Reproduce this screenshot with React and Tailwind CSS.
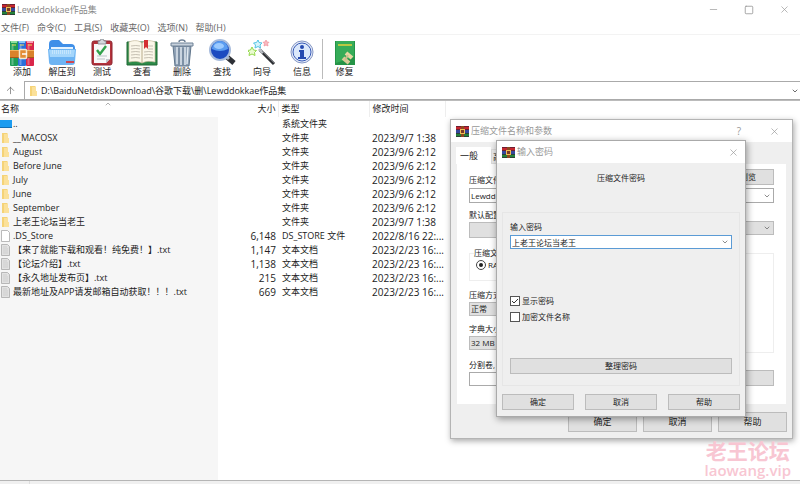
import { useState } from 'react';
import { ArrowUp, ChevronDown, ChevronUp, Minus, Square, X } from 'lucide-react';

const archivos = [
  { nombre: '__MACOSX', tam: '', tipo: '文件夹', fecha: '2023/9/7 1:38', icono: 'carpeta' },
  { nombre: 'August', tam: '', tipo: '文件夹', fecha: '2023/9/6 2:12', icono: 'carpeta' },
  { nombre: 'Before June', tam: '', tipo: '文件夹', fecha: '2023/9/6 2:12', icono: 'carpeta' },
  { nombre: 'July', tam: '', tipo: '文件夹', fecha: '2023/9/6 2:12', icono: 'carpeta' },
  { nombre: 'June', tam: '', tipo: '文件夹', fecha: '2023/9/6 2:12', icono: 'carpeta' },
  { nombre: 'September', tam: '', tipo: '文件夹', fecha: '2023/9/6 2:12', icono: 'carpeta' },
  { nombre: '上老王论坛当老王', tam: '', tipo: '文件夹', fecha: '2023/9/7 1:38', icono: 'carpeta' },
  { nombre: '.DS_Store', tam: '6,148', tipo: 'DS_STORE 文件', fecha: '2022/8/16 22:...', icono: 'vacio' },
  { nombre: '【来了就能下载和观看！纯免费！】.txt', tam: '1,147', tipo: '文本文档', fecha: '2023/2/23 16:...', icono: 'texto' },
  { nombre: '【论坛介绍】.txt', tam: '1,138', tipo: '文本文档', fecha: '2023/2/23 16:...', icono: 'texto' },
  { nombre: '【永久地址发布页】.txt', tam: '215', tipo: '文本文档', fecha: '2023/2/23 16:...', icono: 'texto' },
  { nombre: '最新地址及APP请发邮箱自动获取！！！.txt', tam: '669', tipo: '文本文档', fecha: '2023/2/23 16:...', icono: 'texto' },
];

function Libros({ className }) {
  return (
    <svg viewBox="0 0 24 26" preserveAspectRatio="none" className={className}>
      <rect x="0" y="1" width="8" height="25" rx="1" fill="#1f9d55" />
      <rect x="8" y="1" width="8" height="25" rx="1" fill="#2a6fdb" />
      <rect x="16" y="1" width="8" height="25" rx="1" fill="#d9264a" />
      <path d="M1 1h6v2H1z" fill="#8fe0a0" />
      <path d="M9 1h6v2H9z" fill="#8ccbf8" />
      <path d="M17 1h6v2h-6z" fill="#f9a0b3" />
      <path d="M2.500 4v21M10.500 4v21M18.500 4v21" stroke="#fff" strokeOpacity=".3" strokeWidth="2" />
      <path d="M2 5h4M10 5h4M18 5h4" stroke="#f2d84e" />
      <rect x="0" y="10" width="24" height="8" fill="#d9822b" />
      <path d="M0 10.500h24" stroke="#f3b25c" />
      <path d="M0 17.500h24" stroke="#a65a17" />
      <rect x="9.500" y="9.500" width="7" height="9" rx="1" fill="#e38d35" stroke="#f4ead2" strokeWidth="1.500" />
      <path d="M12 14h5" stroke="#fff" strokeWidth="1.500" />
    </svg>
  );
}

function LibrosMini() {
  return (
    <svg viewBox="0 0 13 11" className="h-[11px] w-[13px] shrink-0">
      <path d="M0 0h13v4H0z" fill="#c5262e" />
      <path d="M0 4h13v3H0z" fill="#35489c" />
      <path d="M0 7h13v4H0z" fill="#24803a" />
      <path d="M0 .5h13M0 3.5h13M0 7.5h13M0 10.5h13" stroke="#321b35" strokeOpacity=".6" />
      <path d="M5 0h3v11H5z" fill="#8d4a20" />
      <rect x="4.5" y="3.5" width="4" height="4" fill="#7b3b25" stroke="#f0bd55" />
    </svg>
  );
}

function IconoCarpeta() {
  return (
    <svg viewBox="0 0 28 27" className="h-[27px] w-7">
      <path d="M1 5a4 4 0 0 1 4-4h6l4 4h8a4 4 0 0 1 4 4v5H1z" fill="#3f8fe8" />
      <path d="M3 8h22v6H3z" fill="#e4f3ff" />
      <path d="M0 10h28l-1 13a3 3 0 0 1-3 3H4a3 3 0 0 1-3-3z" fill="#6db4f3" />
      <path d="M1 11h26l-1 7H2z" fill="#a5d6fb" />
      <path d="M4 14h20M4 12h20" stroke="#e3f4ff" strokeDasharray="1 1" />
      <path d="M18 22h8v2h-8z" fill="#cf4752" />
    </svg>
  );
}

function IconoPrueba() {
  return (
    <svg viewBox="0 0 22 27" className="h-[27px] w-[22px]">
      <rect x="1" y="2" width="20" height="24" rx="2" fill="#b5323b" stroke="#8c2530" />
      <path d="M3 5h16v15l-4 4H3z" fill="#f8f8f8" />
      <path d="M19 20h-4v4z" fill="#c2c8cf" />
      <path d="M7 2h2a2 2 0 0 1 4 0h2v3H7z" fill="#d4d7dc" stroke="#70777e" strokeWidth=".7" />
      <path d="m6 11 3 4 6-8" fill="none" stroke="#31a14b" strokeWidth="2.4" />
      <path d="M6 17h10M6 20h8" stroke="#bdc3ca" />
    </svg>
  );
}

function IconoLibro() {
  return (
    <svg viewBox="0 0 32 27" className="h-[27px] w-8">
      <path d="M1 3h30v23H1z" fill="#2c8a48" stroke="#206935" />
      <path d="M3 3c5-2 9-2 13 1 4-3 8-3 13-1v20c-5-1-9-1-13 1-4-2-8-2-13-1z" fill="#fbf7e9" stroke="#c8bda0" strokeWidth=".7" />
      <path d="M16 4v20" stroke="#b9ac8b" />
      <path d="M5 7q5-1 9 0M5 10q5-1 9 0M5 13q5-1 9 0M5 16q5-1 9 0M5 19q5-1 9 0M18 13q5-1 9 0M18 16q5-1 9 0M18 19q5-1 9 0M22 7h5M22 10h5" fill="none" stroke="#b7b1a3" strokeWidth=".8" />
      <path d="M18 1h4v9l-2-2-2 2z" fill="#d42f32" />
    </svg>
  );
}

function IconoPapelera() {
  return (
    <svg viewBox="0 0 24 28" className="h-7 w-6">
      <path d="M9 3q0-2 3-2t3 2" fill="none" stroke="#708398" strokeWidth="1.5" />
      <path d="M3 7h18l-2 20H5z" fill="#91a3b7" stroke="#60758b" />
      <path d="M7 8v17M11 8v18M15 8v18M18 8l-1 17" stroke="#e1e9f0" strokeWidth="1.4" />
      <path d="M9 9v17M13 9v17" stroke="#60758b" strokeWidth=".8" />
      <path d="M1 4h22v3H1z" fill="#c7d1dc" stroke="#6e8297" />
    </svg>
  );
}

function IconoLupa() {
  return (
    <svg viewBox="0 0 28 28" className="h-7 w-7">
      <path d="m19 18 7 6" stroke="#2d3036" strokeWidth="5" />
      <path d="m18 17 3 3" stroke="#a9b2bd" strokeWidth="3" />
      <circle cx="12" cy="11" r="10" fill="#1c4bc0" stroke="#a6bbdc" strokeWidth="2" />
      <path d="M4 10a8 8 0 0 1 16 0q-8 4-16 0z" fill="#5a9df1" />
      <ellipse cx="11" cy="7" rx="5" ry="3" fill="#9bcaff" />
    </svg>
  );
}

function IconoVarita() {
  return (
    <svg viewBox="0 0 28 28" className="h-7 w-7">
      <path d="m12 11 14 14" stroke="#2e3034" strokeWidth="3" />
      <path d="m11 10 4 4" stroke="#b8bcc2" strokeWidth="3" />
      <path d="m14 12 12 12" stroke="#7c8086" strokeWidth=".8" />
      <path d="m10 1 1 2.500 3 .5-2 2 .500 3-2.500-1.500L7 9l.5-3-2-2 3-.5z" fill="#d4f3fb" stroke="#54c4e4" />
      <path d="m4 8 1.500 3 3 .5-2 2 .500 3L4 15l-3 1.500.5-3-2-2 3-.5z" fill="#eafbd0" stroke="#93d84b" />
      <path d="m18 1 1 2 2 .3-1.500 1.500.5 2.200-2-1-2 1 .5-2.200L15 3.300l2-.3z" fill="#f9b9bf" stroke="#ee8e99" strokeWidth=".7" />
    </svg>
  );
}

function IconoInfo() {
  return (
    <svg viewBox="0 0 24 27" className="h-[27px] w-6">
      <circle cx="12" cy="13" r="11" fill="#e7edf8" stroke="#8395c4" />
      <circle cx="12" cy="13" r="9" fill="#dbe8fb" stroke="#3659b7" />
      <circle cx="12" cy="8" r="2" fill="#2449b0" />
      <path d="M9 11h5v7h2v2H8v-2h2v-5H9z" fill="#2449b0" />
    </svg>
  );
}

function IconoReparar() {
  return (
    <svg viewBox="0 0 20 26" className="h-[26px] w-5">
      <path d="M0 1h20v24H0z" fill="#259447" />
      <path d="M1 1h18v16L1 23z" fill="#36ac58" />
      <path d="M3 5h14" stroke="#e5d23d" strokeWidth="1.500" />
      <path d="m11 13 6 5" stroke="#e6d7a2" strokeWidth="4" />
      <path d="m8 18 6 5" stroke="#d8cc98" strokeWidth="4" />
      <path d="m13 15-3 5" stroke="#c7bd8c" strokeWidth="2" />
    </svg>
  );
}

const herramientas = [
  { texto: '添加', icono: <Libros className="h-[26px] w-6" /> },
  { texto: '解压到', icono: <IconoCarpeta /> },
  { texto: '测试', icono: <IconoPrueba /> },
  { texto: '查看', icono: <IconoLibro /> },
  { texto: '删除', icono: <IconoPapelera /> },
  { texto: '查找', icono: <IconoLupa /> },
  { texto: '向导', icono: <IconoVarita /> },
  { texto: '信息', icono: <IconoInfo /> },
];

function IconoArchivo({ tipo }) {
  if (tipo === 'disco') {
    return (
      <svg viewBox="0 0 12 10" className="h-[10px] w-3 shrink-0">
        <path d="M0 1h12v7H0z" fill="#1c9cf0" />
        <path d="M0 8h12v1H0z" fill="#1370b5" />
      </svg>
    );
  }
  if (tipo === 'carpeta') {
    return (
      <svg viewBox="0 0 12 12" className="h-3 w-3 shrink-0">
        <path d="M2 1h5l1 1v9H2z" fill="#f5d377" />
        <path d="M4 2h4v4h1v5H4z" fill="#fbe19a" />
      </svg>
    );
  }
  return (
    <svg viewBox="0 0 12 12" className="h-3 w-3 shrink-0">
      <path d="M1.500.5h6l2 2v9h-8z" fill={tipo === 'texto' ? '#e2e2e2' : '#fff'} stroke="#aaa" strokeWidth=".8" />
      {tipo === 'texto' && <path d="M3 3h4M3 5h5M3 7h5M3 9h5" stroke="#c4c4c4" strokeWidth=".7" />}
    </svg>
  );
}

function Boton({ children, className, etiqueta }) {
  return (
    <button type="button" aria-label={etiqueta} className={`flex items-center justify-center border border-[#bcbcbc] bg-[#e0e0e0] ${className}`}>
      {children}
    </button>
  );
}

function Desplegable({ id, valor, className }) {
  return (
    <div className={`relative flex h-[14px] border border-[#bcbcbc] ${className}`}>
      <select id={id} aria-label={valor || '配置'} className="w-full appearance-none bg-transparent px-px text-[8px] leading-3">
        <option>{valor}</option>
      </select>
      <ChevronDown size={8} className="pointer-events-none absolute top-[2px] right-[2px] text-[#555]" />
    </div>
  );
}

function DialogoCompresion() {
  return (
    <section className="absolute top-[119px] left-[450px] flex w-[343px] flex-col border border-[#b4b4b4] bg-[#efefef] text-[8px] leading-3 shadow-[1px_2px_6px_rgba(0,0,0,0.35)]">
      <header className="flex h-[22px] items-center bg-white pr-3 pl-[5px] text-[9px] text-[#999]">
        <LibrosMini />
        <h2 className="ml-[2px] flex-1">压缩文件名称和参数</h2>
        <button type="button" className="mr-7 text-[10px]">?</button>
        <button type="button" aria-label="关闭"><X size={11} strokeWidth={1.5} /></button>
      </header>
      <div className="flex h-[22px] items-end pl-[5px] text-[9px]">
        <button type="button" className="h-[17px] w-[35px] bg-white pr-[9px]">一般</button>
        <button type="button" className="h-[15px] w-8 border border-[#ddd] bg-[#ececec] pl-px text-left">高级</button>
      </div>
      <div className="mx-[6px] h-60 bg-white px-3 pt-[5px]">
        <div className="flex justify-between">
          <label htmlFor="nombre" className="pt-[5px]">压缩文件名</label>
          <Boton className="h-4 w-[52px]">浏览</Boton>
        </div>
        <div className="relative mt-[2px]">
          <input id="nombre" defaultValue="Lewddokkae作品集.rar" className="block h-[15px] w-full border border-[#aaa] px-px text-[8px]" />
          <ChevronDown size={8} className="absolute top-1 right-[3px] text-[#555]" />
        </div>
        <div className="flex pt-[6px]">
          <div className="w-28">
            <p>默认配置</p>
            <Boton etiqueta="配置" className="mt-px h-4 w-20" />
          </div>
          <Desplegable valor="" className="mt-3 flex-1 bg-[#e0e0e0]" />
        </div>
        <div className="flex gap-3 pt-[9px]">
          <div className="w-[100px]">
            <fieldset className="h-[34px] border border-[#eee] px-[6px]">
              <legend className="-ml-[2px]">压缩文件格式</legend>
              <label className="flex items-center gap-[2px]">
                <input type="radio" name="formato" defaultChecked className="h-[10px] w-[10px] appearance-none rounded-full border border-[#444] bg-[#222] bg-clip-content p-[2px]" />
                RAR
              </label>
            </fieldset>
            <label htmlFor="metodo" className="mt-[8px] block">压缩方式</label>
            <Desplegable id="metodo" valor="正常" className="mt-px bg-[#e0e0e0]" />
            <label htmlFor="diccionario" className="mt-[7px] block">字典大小</label>
            <Desplegable id="diccionario" valor="32 MB" className="mt-px bg-[#e0e0e0]" />
          </div>
          <fieldset className="h-[106px] flex-1 border border-[#eee]">
            <legend>压缩选项</legend>
          </fieldset>
        </div>
        <div className="flex items-end justify-between pt-[6px]">
          <div>
            <label htmlFor="volumen" className="block">分割卷, 大小</label>
            <input id="volumen" className="mt-px block h-[14px] w-[100px] border border-[#aaa]" />
          </div>
          <Boton className="h-4 w-24" />
        </div>
      </div>
      <div className="flex justify-end gap-[6px] px-[5px] pt-2 pb-[6px] text-[9px]">
        <Boton className="h-5 w-[69px]">确定</Boton>
        <Boton className="h-5 w-[69px]">取消</Boton>
        <Boton className="h-5 w-[69px]">帮助</Boton>
      </div>
    </section>
  );
}

function DialogoClave() {
  const [clave, setClave] = useState('上老王论坛当老王');
  const [mostrar, setMostrar] = useState(true);
  const [cifrar, setCifrar] = useState(false);
  const casilla = 'h-[10px] w-[10px] appearance-none border border-[#555] bg-white';

  return (
    <section className="absolute top-[140px] left-[496px] flex w-[250px] flex-col border border-[#aaa] bg-[#efefef] text-[8px] leading-3 shadow-[1px_2px_7px_rgba(0,0,0,0.4)]">
      <header className="flex h-[22px] items-center bg-white pr-[6px] pl-[5px] text-[9px] text-[#999]">
        <LibrosMini />
        <h2 className="ml-[2px] flex-1">输入密码</h2>
        <button type="button" aria-label="关闭"><X size={11} strokeWidth={1.5} /></button>
      </header>
      <p className="pt-[9px] text-center">压缩文件密码</p>
      <div className="mx-[5px] mt-7 flex h-[174px] flex-col border border-[#e6e6e6] px-[7px] pt-2">
        <label htmlFor="clave">输入密码</label>
        <div className="relative mt-[2px]">
          <input
            id="clave"
            type={mostrar ? 'text' : 'password'}
            value={clave}
            onChange={(e) => setClave(e.target.value)}
            className="block h-[14px] w-full border border-[#5b9bd5] bg-white px-px text-[8px] outline-none"
          />
          <ChevronDown size={8} className="absolute top-[3px] right-[3px] text-[#555]" />
        </div>
        <label className="mt-[46px] flex items-center gap-[2px]">
          <span className="relative flex">
            <input type="checkbox" checked={mostrar} onChange={(e) => setMostrar(e.target.checked)} className={casilla} />
            {mostrar && (
              <svg viewBox="0 0 10 10" className="pointer-events-none absolute inset-0 h-[10px] w-[10px]">
                <path d="m2 5 2 2 4-4" fill="none" stroke="#333" />
              </svg>
            )}
          </span>
          显示密码
        </label>
        <label className="mt-1 flex items-center gap-[2px]">
          <input type="checkbox" checked={cifrar} onChange={(e) => setCifrar(e.target.checked)} className={casilla} />
          加密文件名称
        </label>
        <Boton className="mt-[35px] h-4 w-full">整理密码</Boton>
      </div>
      <div className="flex justify-between px-[5px] pt-2 pb-[6px]">
        <Boton className="h-4 w-[72px]">确定</Boton>
        <Boton className="h-4 w-[72px]">取消</Boton>
        <Boton className="h-4 w-[72px]">帮助</Boton>
      </div>
    </section>
  );
}

export default function App() {
  return (
    <div className="relative flex min-h-screen flex-col overflow-hidden bg-white font-['Open_Sans','Noto_Sans_CJK_SC',sans-serif] text-[9px] leading-[14px] text-[#222]">
      <header className="flex h-[19px] items-center pr-[10px] pl-[2px] text-[#888]">
        <LibrosMini />
        <h1 className="ml-[2px] flex-1">Lewddokkae作品集</h1>
        <div className="flex items-center gap-[25px] text-[#999]">
          <button type="button" aria-label="最小化"><Minus size={11} strokeWidth={1.5} /></button>
          <button type="button" aria-label="最大化"><Square size={10} strokeWidth={2} /></button>
          <button type="button" aria-label="关闭"><X size={11} strokeWidth={1.5} /></button>
        </div>
      </header>
      <nav className="flex h-4 items-center gap-2 border-b border-[#f3f3f3] pt-[2px] pl-px text-[#666]">
        {['文件(F)', '命令(C)', '工具(S)', '收藏夹(O)', '选项(N)', '帮助(H)'].map((m) => (
          <button key={m} type="button">{m}</button>
        ))}
      </nav>
      <div className="flex h-[46px] pt-1 pl-[2px]">
        {herramientas.map((h) => (
          <button key={h.texto} type="button" className="flex w-10 flex-col items-center">
            <span className="flex h-[27px] items-center">{h.icono}</span>
            <span className="leading-3">{h.texto}</span>
          </button>
        ))}
        <div className="h-10 w-px bg-[#bbb]" />
        <button type="button" className="flex w-[43px] flex-col items-center">
          <span className="flex h-[27px] items-center"><IconoReparar /></span>
          <span className="leading-3">修复</span>
        </button>
      </div>
      <div className="flex h-[19px] border-b border-[#aaa]">
        <button type="button" aria-label="上一级" className="flex w-6 items-center pl-[5px] text-[#666]">
          <ArrowUp size={11} strokeWidth={1.5} />
        </button>
        <div className="flex flex-1 items-center border-t border-l border-[#aaa] pr-px pl-[3px]">
          <IconoArchivo tipo="carpeta" />
          <input aria-label="地址" defaultValue="D:\BaiduNetdiskDownload\谷歌下载\删\Lewddokkae作品集" className="h-4 min-w-0 flex-1 pl-px text-[9px] outline-none" />
          <ChevronDown size={8} />
        </div>
      </div>
      <main className="relative flex flex-1 border-t border-[#bbb]">
        <ChevronUp size={8} className="absolute -top-px left-[104px] text-[#888]" />
        <table className="w-full table-fixed border-collapse">
          <colgroup>
            <col className="w-[218px]" />
            <col className="w-[60px]" />
            <col className="w-[91px]" />
            <col className="w-[76px]" />
            <col />
          </colgroup>
          <thead>
            <tr className="h-4 text-left">
              <th className="pl-px font-normal">名称</th>
              <th className="border-r border-[#eee] pr-[2px] text-right font-normal">大小</th>
              <th className="border-r border-[#eee] pl-[3px] font-normal">类型</th>
              <th className="border-r border-[#eee] pl-[3px] font-normal">修改时间</th>
              <th />
            </tr>
          </thead>
          <tbody>
            <tr className="h-[14px]">
              <td className="bg-[#f6f6f6]"><div className="flex h-[14px] items-center gap-px"><IconoArchivo tipo="disco" />..</div></td>
              <td />
              <td className="pl-1">系统文件夹</td>
              <td />
              <td />
            </tr>
            {archivos.map((a) => (
              <tr key={a.nombre} className="h-[14px] whitespace-nowrap">
                <td className="bg-[#f6f6f6]"><div className="flex h-[14px] items-center gap-px"><IconoArchivo tipo={a.icono} />{a.nombre}</div></td>
                <td className="pr-[2px] text-right text-[10px]">{a.tam}</td>
                <td className="pl-1">{a.tipo}</td>
                <td className="pl-[3px] text-[10px]">{a.fecha}</td>
                <td />
              </tr>
            ))}
            <tr>
              <td className="bg-[#f6f6f6]" />
              <td colSpan={4} />
            </tr>
          </tbody>
        </table>
      </main>
      <footer className="flex h-1 border-t border-[#b5b5b5] bg-[#f0f0f0]">
        <div className="w-[30px] border-r border-[#ddd]" />
      </footer>
      <DialogoCompresion />
      <DialogoClave />
      <div className="absolute right-[9px] bottom-[5px] flex flex-col items-center text-[#f8c6d2]">
        <span className="text-[21px] leading-5 font-bold">老王论坛</span>
        <span className="text-[15px] leading-[18px] font-semibold">laowang.vip</span>
      </div>
    </div>
  );
}
